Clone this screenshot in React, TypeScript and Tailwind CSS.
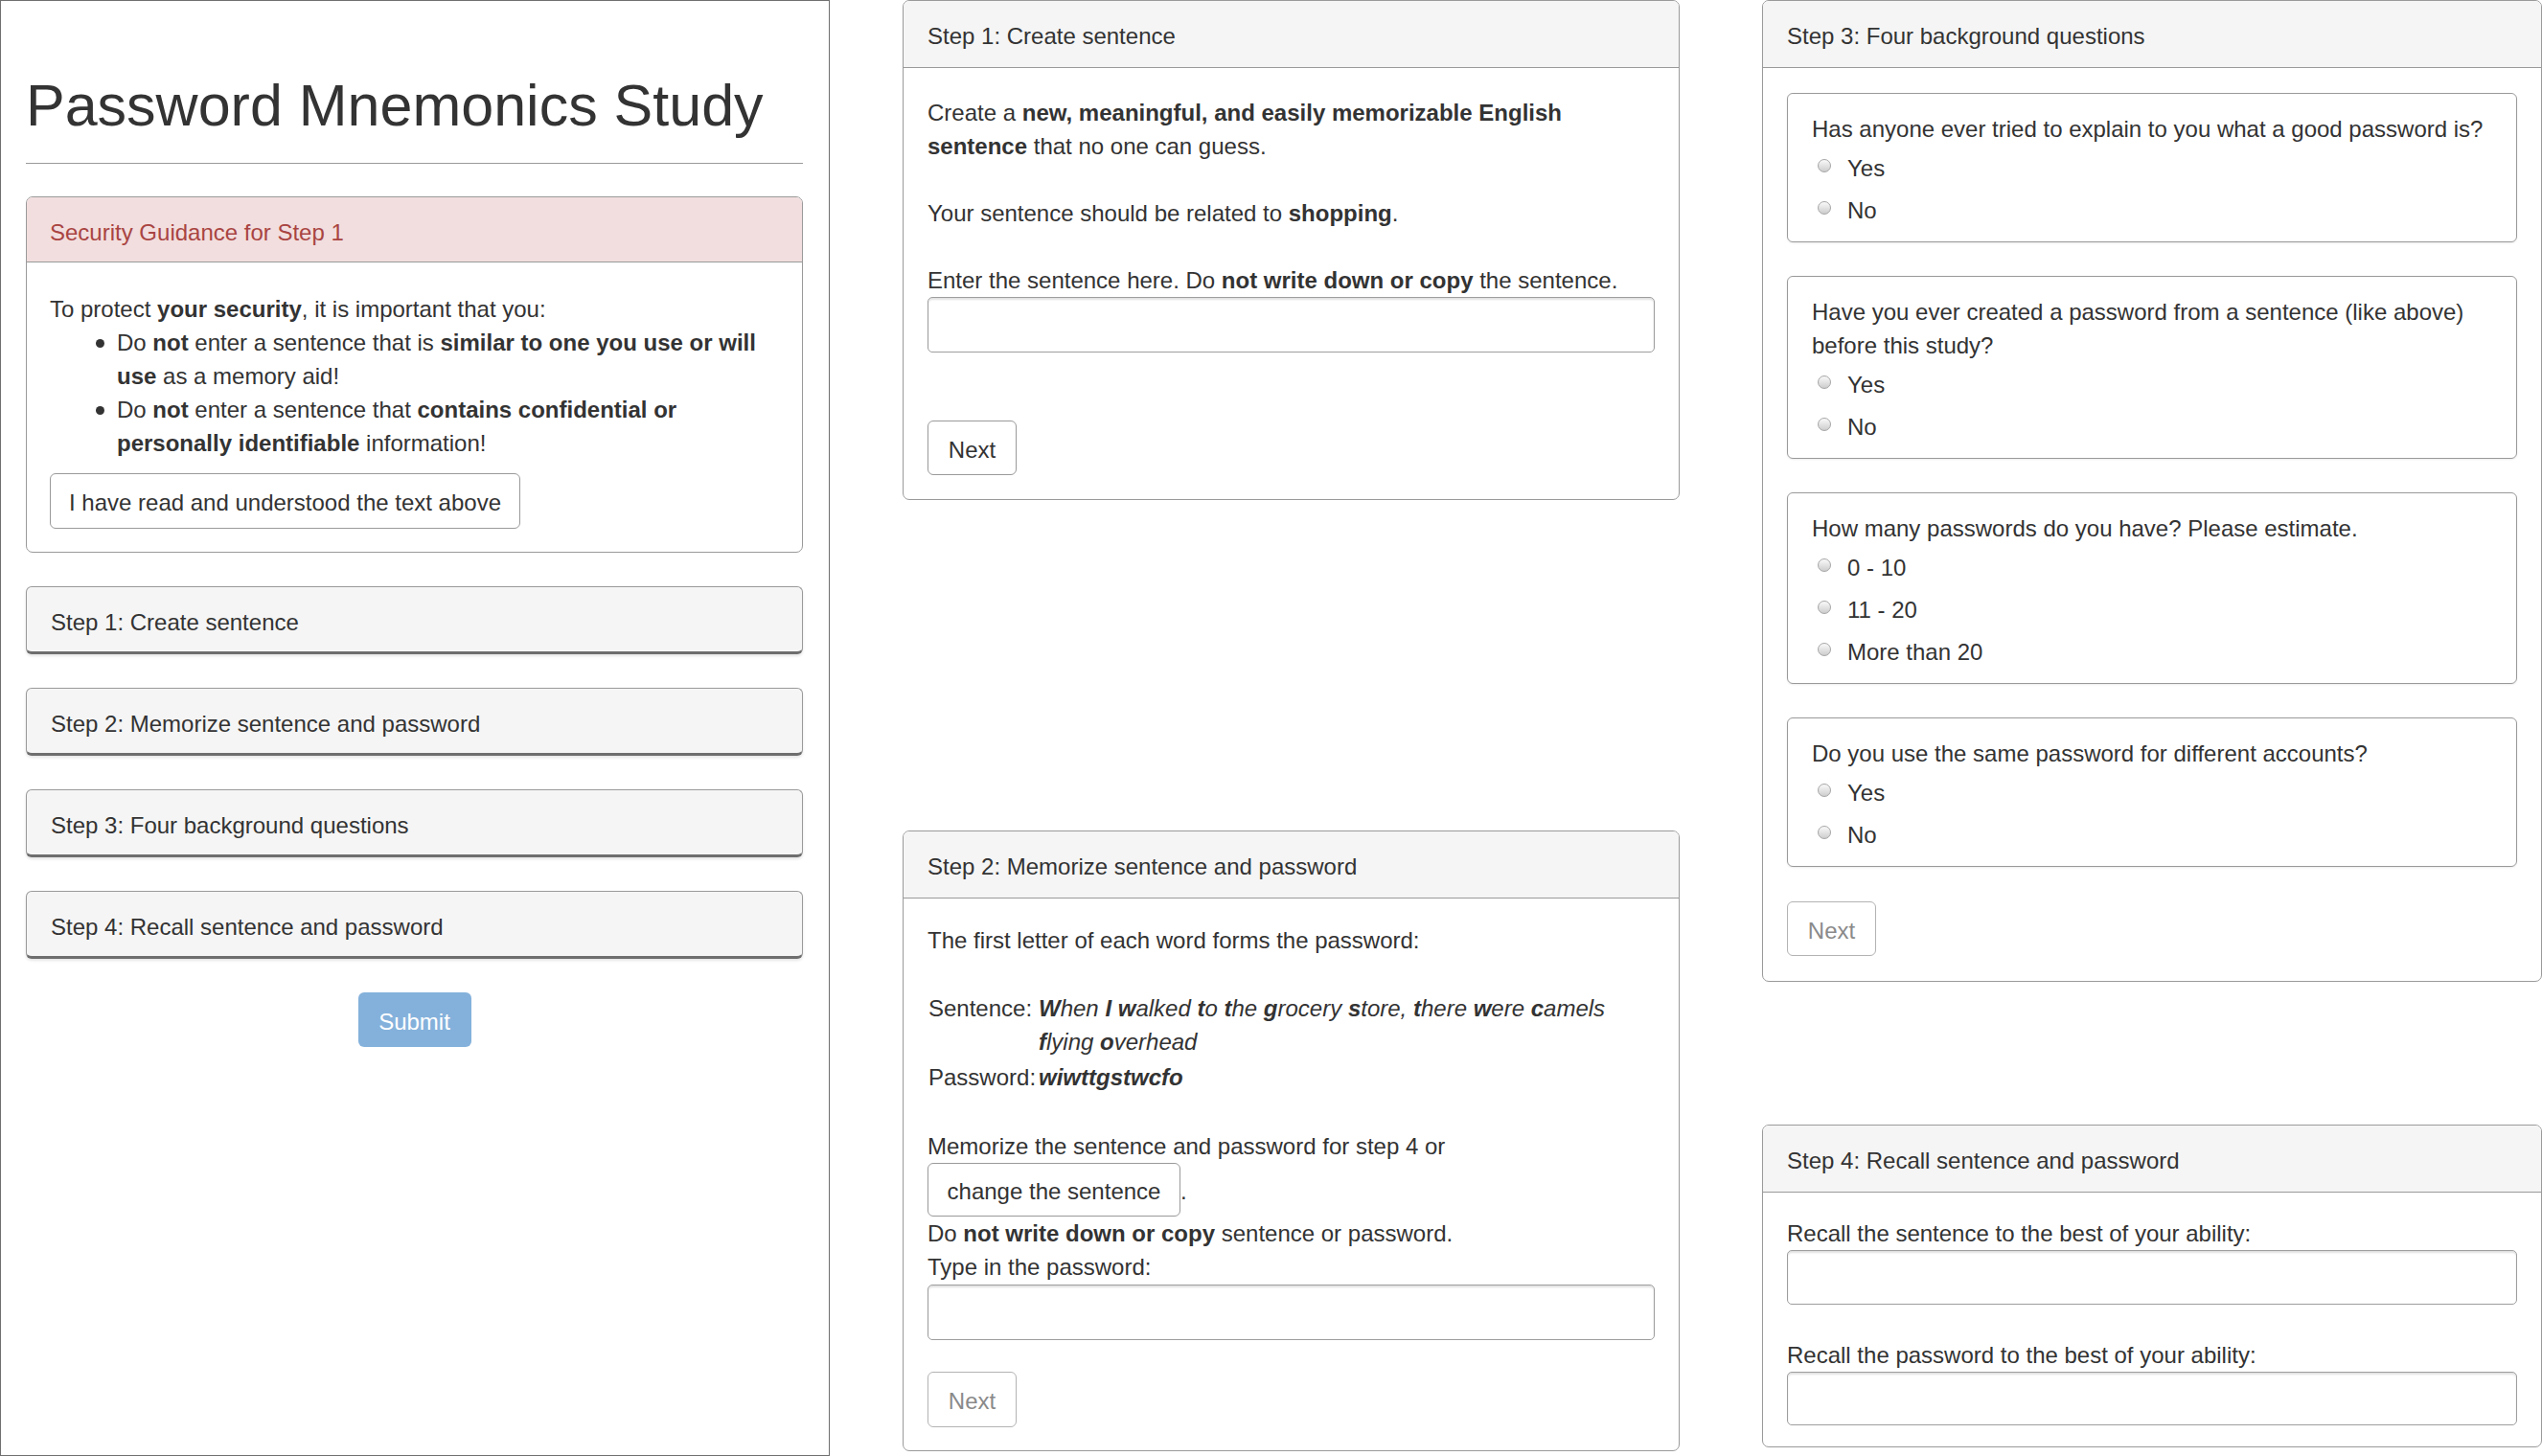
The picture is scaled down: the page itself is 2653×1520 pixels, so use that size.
import React from 'react';
import clsx from 'clsx';

// nudges glyphs down a few px without moving the rest of the flow
const nudge = 'pt-[3px] -mb-[3px]';
const nudge2 = 'pt-[2px] -mb-[2px]';

function Btn({ children, disabled, className }: { children: React.ReactNode; disabled?: boolean; className?: string }) {
  return (
    <button
      className={clsx(
        'flex items-center justify-center rounded-[6px] border bg-white pt-[3px] text-[24px] leading-[35px]',
        disabled ? 'border-[#b3b3b3] text-[#8a8a8a]' : 'border-[#9a9a9a] text-[#333]',
        className,
      )}
    >
      {children}
    </button>
  );
}

function Field({ className }: { className?: string }) {
  return (
    <div
      className={clsx(
        'w-full rounded-[5px] border border-[#9e9e9e] bg-white shadow-[inset_0_2px_2px_rgba(0,0,0,0.12)]',
        className,
      )}
    />
  );
}

function Panel({ title, children, className }: { title: string; children: React.ReactNode; className?: string }) {
  return (
    <div className={clsx('overflow-hidden rounded-[7px] border border-[#9a9a9a] bg-white', className)}>
      <div className="flex h-[70px] items-center border-b border-[#9a9a9a] bg-[#f5f5f5] px-[25px] pt-[3px]">{title}</div>
      {children}
    </div>
  );
}

function Radio({ label }: { label: string }) {
  return (
    <div className="flex h-[44px] items-center">
      <span className="ml-[6px] mr-[17px] h-[14px] w-[14px] shrink-0 rounded-full border border-[#a6a6a6] bg-linear-to-b from-[#fafafa] to-[#cdcdcd]" />
      <span className="mt-[4px]">{label}</span>
    </div>
  );
}

function Question({ q, options }: { q: string; options: string[] }) {
  return (
    <div className="rounded-[6px] border border-[#9a9a9a] pb-[13px] pl-[25px] pr-[15px] pt-[16px] shadow-[0_1px_2px_rgba(0,0,0,0.08)]">
      <p className={nudge}>{q}</p>
      <div className="mt-[2px]">
        {options.map((o) => (
          <Radio key={o} label={o} />
        ))}
      </div>
    </div>
  );
}

function StepBar({ title }: { title: string }) {
  return (
    <div className="flex h-[71px] items-center rounded-[6px] border border-[#9a9a9a] border-b-[3px] border-b-[#6e6e6e] bg-[#f5f5f5] px-[25px] pt-[5px] shadow-[0_2px_3px_rgba(0,0,0,0.1)]">
      {title}
    </div>
  );
}

function Bullet({ children }: { children: React.ReactNode }) {
  return (
    <li className="relative">
      <span className="absolute left-[-22px] top-[14px] h-[9px] w-[9px] rounded-full bg-[#333]" />
      {children}
    </li>
  );
}

// first letter of each word bold, whole sentence italic
const sentence = 'When I walked to the grocery store, there were camels flying overhead';

export default function App() {
  return (
    <div className="flex h-[1520px] w-[2653px] bg-white font-['Liberation_Sans',Arial,sans-serif] text-[24px] leading-[35px] text-[#333]">
      {/* left column */}
      <div className="h-[1520px] w-[866px] shrink-0 border border-[#6f6f6f] pl-[26px] pr-[27px] pt-[76px]">
        <h1 className="text-[61px] leading-[67px]">Password Mnemonics Study</h1>
        <div className="mt-[26px] h-px bg-[#9a9a9a]" />

        <div className="mt-[34px] overflow-hidden rounded-[7px] border border-[#9a9a9a]">
          <div className="border-b border-[#9a9a9a] bg-[#f2dede] px-[24px] pb-[13px] pt-[19px] text-[#a94442]">
            Security Guidance for Step 1
          </div>
          <div className="px-[24px] pb-[24px] pt-[31px]">
            <p>
              To protect <b>your security</b>, it is important that you:
            </p>
            <ul className="pl-[70px]">
              <Bullet>
                Do <b>not</b> enter a sentence that is <b>similar to one you use or will use</b> as a memory aid!
              </Bullet>
              <Bullet>
                Do <b>not</b> enter a sentence that <b>contains confidential or personally identifiable</b> information!
              </Bullet>
            </ul>
            <Btn className="mt-[14px] h-[58px] w-[491px]">I have read and understood the text above</Btn>
          </div>
        </div>

        <div className="mt-[35px] flex flex-col gap-[35px]">
          <StepBar title="Step 1: Create sentence" />
          <StepBar title="Step 2: Memorize sentence and password" />
          <StepBar title="Step 3: Four background questions" />
          <StepBar title="Step 4: Recall sentence and password" />
        </div>

        <button className="mx-auto mt-[35px] flex h-[57px] w-[118px] items-center justify-center rounded-[6px] bg-[#84b1db] pt-[3px] text-white">
          Submit
        </button>
      </div>

      {/* middle column */}
      <div className="ml-[76px] w-[811px] shrink-0">
        <Panel title="Step 1: Create sentence">
          <div className="px-[25px] pb-[25px] pt-[26px]">
            <p className={nudge}>
              Create a <b>new, meaningful, and easily memorizable English sentence</b> that no one can guess.
            </p>
            <p className={clsx('mt-[35px]', nudge)}>
              Your sentence should be related to <b>shopping</b>.
            </p>
            <p className={clsx('mt-[35px]', nudge)}>
              Enter the sentence here. Do <b>not write down or copy</b> the sentence.
            </p>
            <Field className="mt-[3px] h-[58px]" />
            <Btn className="mt-[71px] h-[57px] w-[93px]">Next</Btn>
          </div>
        </Panel>

        <Panel title="Step 2: Memorize sentence and password" className="mt-[345px]">
          <div className="px-[25px] pb-[24px] pt-[24px]">
            <p className={nudge2}>The first letter of each word forms the password:</p>
            <div className={clsx('mt-[35px] grid grid-cols-[116px_1fr]', nudge2)}>
              <div className="py-[1px] pl-[1px]">Sentence:</div>
              <div className="py-[1px] italic">
                {sentence.split(' ').map((w, i) => (
                  <span key={i}>
                    <b>{w[0]}</b>
                    {w.slice(1)}{' '}
                  </span>
                ))}
              </div>
              <div className="py-[1px] pl-[1px]">Password:</div>
              <div className="py-[1px] font-bold italic">wiwttgstwcfo</div>
            </div>
            <p className={clsx('mt-[36px]', nudge2)}>Memorize the sentence and password for step 4 or</p>
            <div className="mt-[2px] flex items-baseline">
              <Btn className="h-[56px] w-[264px]">change the sentence</Btn>
              <span>.</span>
            </div>
            <p>
              Do <b>not write down or copy</b> sentence or password.
            </p>
            <p>Type in the password:</p>
            <Field className="mt-[1px] h-[58px]" />
            <Btn disabled className="mt-[33px] h-[58px] w-[93px]">
              Next
            </Btn>
          </div>
        </Panel>
      </div>

      {/* right column */}
      <div className="ml-[86px] w-[814px] shrink-0">
        <Panel title="Step 3: Four background questions">
          <div className="px-[25px] pb-[26px] pt-[26px]">
            <div className="flex flex-col gap-[35px]">
              <Question q="Has anyone ever tried to explain to you what a good password is?" options={['Yes', 'No']} />
              <Question
                q="Have you ever created a password from a sentence (like above) before this study?"
                options={['Yes', 'No']}
              />
              <Question q="How many passwords do you have? Please estimate." options={['0 - 10', '11 - 20', 'More than 20']} />
              <Question q="Do you use the same password for different accounts?" options={['Yes', 'No']} />
            </div>
            <Btn disabled className="mt-[36px] h-[57px] w-[93px]">
              Next
            </Btn>
          </div>
        </Panel>

        <Panel title="Step 4: Recall sentence and password" className="mt-[149px]">
          <div className="px-[25px] pb-[22px] pt-[23px]">
            <p className={nudge2}>Recall the sentence to the best of your ability:</p>
            <Field className="mt-[2px] h-[57px]" />
            <p className={clsx('mt-[33px]', nudge2)}>Recall the password to the best of your ability:</p>
            <Field className="mt-[2px] h-[56px]" />
          </div>
        </Panel>
      </div>
    </div>
  );
}
